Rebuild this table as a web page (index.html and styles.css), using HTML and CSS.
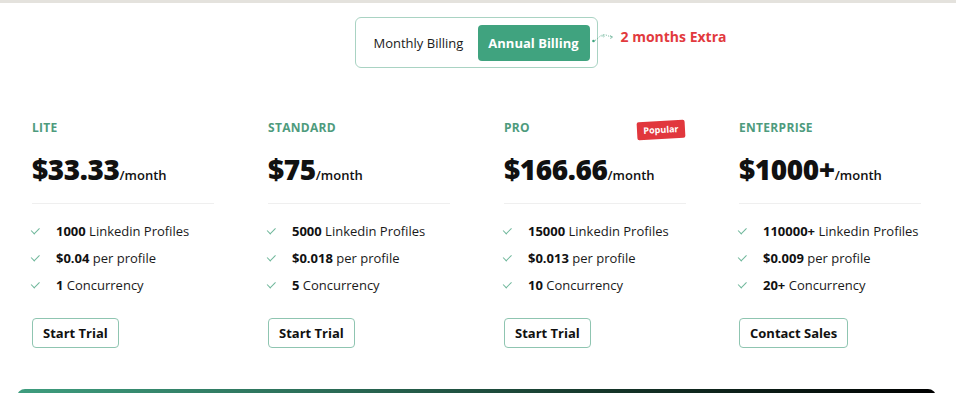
FILE: index.html
```html
<!DOCTYPE html>
<html lang="en">
<head>
<meta charset="utf-8">
<title>Pricing</title>
<link rel="stylesheet" href="styles.css">
</head>
<body>
<div class="topbar"></div>
<div class="toggle-row">
  <div class="toggle">
    <span class="opt">Monthly Billing</span>
    <span class="opt active">Annual Billing</span>
    <div class="extra">
      <svg class="arrow" width="26" height="12" viewBox="0 0 26 12"><circle cx="1.5" cy="9" r="1.3" fill="#3fa47f"/><path d="M3 8.5 C7 6 8 3 11 3 C13 3 13 5 11 5 C9 5 10 2 14 3 L19 5" fill="none" stroke="#6fb59b" stroke-width="0.9" stroke-dasharray="1.2 1.2"/><path d="M18 3.6 L20.5 5 L18.4 6.6" fill="none" stroke="#6fb59b" stroke-width="0.9"/></svg>
      <span>2 months Extra</span>
    </div>
  </div>
</div>

<div class="plans">
  <div class="plan">
    <div class="name">LITE</div>
    <div class="price"><span class="amt">$33.33</span><span class="per">/month</span></div>
    <div class="sep"></div>
    <ul class="feats">
      <li><span class="chk"></span><b>1000</b> Linkedin Profiles</li>
      <li><span class="chk"></span><b>$0.04</b> per profile</li>
      <li><span class="chk"></span><b>1</b> Concurrency</li>
    </ul>
    <button class="btn">Start Trial</button>
  </div>
  <div class="plan">
    <div class="name">STANDARD</div>
    <div class="price"><span class="amt">$75</span><span class="per">/month</span></div>
    <div class="sep"></div>
    <ul class="feats">
      <li><span class="chk"></span><b>5000</b> Linkedin Profiles</li>
      <li><span class="chk"></span><b>$0.018</b> per profile</li>
      <li><span class="chk"></span><b>5</b> Concurrency</li>
    </ul>
    <button class="btn">Start Trial</button>
  </div>
  <div class="plan">
    <div class="name">PRO <span class="badge">Popular</span></div>
    <div class="price"><span class="amt">$166.66</span><span class="per">/month</span></div>
    <div class="sep"></div>
    <ul class="feats">
      <li><span class="chk"></span><b>15000</b> Linkedin Profiles</li>
      <li><span class="chk"></span><b>$0.013</b> per profile</li>
      <li><span class="chk"></span><b>10</b> Concurrency</li>
    </ul>
    <button class="btn">Start Trial</button>
  </div>
  <div class="plan">
    <div class="name">ENTERPRISE</div>
    <div class="price"><span class="amt">$1000+</span><span class="per">/month</span></div>
    <div class="sep"></div>
    <ul class="feats">
      <li><span class="chk"></span><b>110000+</b> Linkedin Profiles</li>
      <li><span class="chk"></span><b>$0.009</b> per profile</li>
      <li><span class="chk"></span><b>20+</b> Concurrency</li>
    </ul>
    <button class="btn">Contact Sales</button>
  </div>
</div>

<div class="bottom-bar"></div>
</body>
</html>
```

FILE: styles.css
```css
* { box-sizing: border-box; }
html, body { margin: 0; padding: 0; }
body {
  width: 956px;
  height: 393px;
  overflow: hidden;
  background: #ffffff;
  font-family: "Open Sans", "Liberation Sans", sans-serif;
  color: #111111;
}
.topbar {
  height: 3px;
  background: #e4e2dd;
}
.toggle-row {
  display: flex;
  justify-content: center;
  padding-right: 4px;
  margin-top: 14px;
}
.toggle {
  position: relative;
  display: flex;
  align-items: center;
  height: 51px;
  width: 243px;
  padding: 0 7px 0 18px;
  border: 1px solid #a9d3c3;
  border-radius: 6px;
  justify-content: space-between;
}
.opt {
  font-size: 13px;
  color: #1a1a1a;
}
.opt.active {
  display: flex;
  align-items: center;
  justify-content: center;
  width: 112px;
  height: 36px;
  background: #40a37f;
  color: #ffffff;
  font-weight: 700;
  border-radius: 4px;
}
.extra {
  position: absolute;
  left: 236px;
  top: 9px;
  display: flex;
  align-items: center;
  gap: 3px;
  white-space: nowrap;
  color: #e23a3e;
  font-weight: 700;
  font-size: 14px;
}
.arrow { margin-top: 3px; }
.plans {
  display: grid;
  grid-template-columns: 236px 236px 235px 236px;
  padding-left: 32px;
  margin-top: 52px;
}
.plan { display: flex; flex-direction: column; align-items: flex-start; }
.name {
  position: relative;
  width: 182px;
  height: 16px;
  line-height: 16px;
  font-size: 12px;
  font-weight: 700;
  color: #4e9b7d;
  letter-spacing: 0.3px;
}
.badge {
  position: absolute;
  left: 133px;
  top: 1px;
  width: 48px;
  height: 18px;
  line-height: 18px;
  text-align: center;
  background: #e1373d;
  color: #ffffff;
  font-size: 9px;
  font-weight: 700;
  letter-spacing: 0;
  border-radius: 2px;
  transform: rotate(-3deg);
}
.price {
  margin-top: 15px;
  height: 36px;
  display: flex;
  align-items: baseline;
}
.amt {
  font-size: 28px;
  font-weight: 800;
  letter-spacing: -0.4px;
  line-height: 36px;
}
.per {
  font-size: 13px;
  font-weight: 600;
  margin-left: 0;
}
.sep {
  margin-top: 16px;
  width: 182px;
  height: 1px;
  background: #efefef;
}
.feats {
  list-style: none;
  margin: 13px 0 0;
  padding: 0;
}
.feats li {
  display: flex;
  align-items: center;
  height: 27px;
  font-size: 13px;
  color: #1a1a1a;
  white-space: pre;
}
.feats b { font-weight: 700; color: #111; }
.chk {
  width: 8px;
  height: 5px;
  margin: 0 16px 0 0;
  border-left: 1px solid #6fb79b;
  border-bottom: 1px solid #6fb79b;
  transform: rotate(-45deg) translateY(-1px);
}
.btn {
  margin-top: 20px;
  height: 30px;
  padding: 0 10px;
  background: #ffffff;
  border: 1px solid #8fc5b1;
  border-radius: 4px;
  font-family: inherit;
  font-size: 13px;
  font-weight: 700;
  color: #111111;
}
.bottom-bar {
  margin: 41px 20px 0 17px;
  height: 12px;
  border-radius: 8px 8px 0 0;
  background: linear-gradient(90deg, #3e9d7e 0%, #2a6a55 35%, #143428 65%, #000000 100%);
}
```
